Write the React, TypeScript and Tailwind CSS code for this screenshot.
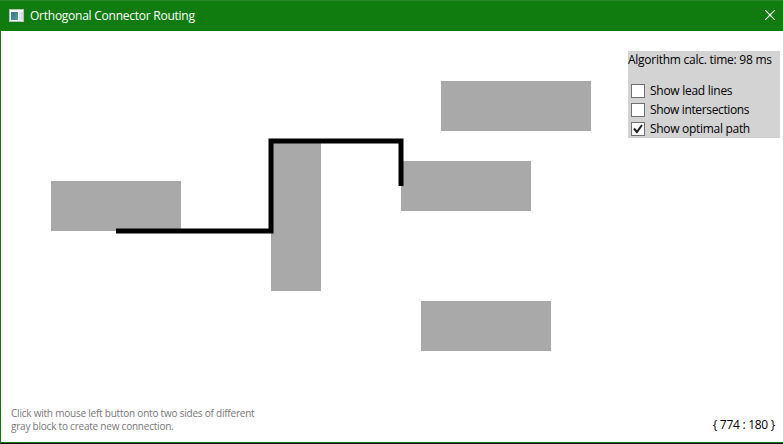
import React from "react";

const blocks = [
  "left-[50px] top-[150px] w-[130px] h-[50px]",
  "left-[270px] top-[110px] w-[50px] h-[150px]",
  "left-[440px] top-[50px] w-[150px] h-[50px]",
  "left-[400px] top-[130px] w-[130px] h-[50px]",
  "left-[420px] top-[270px] w-[130px] h-[50px]",
];

const options = [
  { label: "Show lead lines", checked: false, spacing: "tracking-[-0.27px]" },
  { label: "Show intersections", checked: false, spacing: "tracking-[-0.36px]" },
  { label: "Show optimal path", checked: true, spacing: "tracking-[-0.3px]" },
];

function TitleBar() {
  return (
    <header className="flex h-[31px] items-center border-t border-[#2a8a2a] bg-[#107c10] pl-[9px] pr-2 text-white">
      <svg width="15" height="13" viewBox="0 0 15 13" className="relative -top-px shrink-0">
        <defs>
          <linearGradient id="pane" x1="0" y1="0" x2="1" y2="1">
            <stop offset="0" stopColor="#3c6f9c" />
            <stop offset="1" stopColor="#4fa08a" />
          </linearGradient>
        </defs>
        <rect width="15" height="13" fill="#b9bec0" />
        <rect x="1" y="1" width="13" height="11" fill="#f4f4f6" />
        <rect x="2" y="3" width="7" height="8" fill="url(#pane)" />
        <rect x="10" y="3" width="2" height="8" fill="#e6e9ec" />
        <rect x="12" y="3" width="2" height="8" fill="#d3dcd8" />
      </svg>
      <h1 className="ml-1.5 whitespace-nowrap text-[12px] leading-4 tracking-[-0.25px]">Orthogonal Connector Routing</h1>
      <svg className="relative -top-px ml-auto" width="10" height="10" viewBox="0 0 10 10" stroke="white" strokeWidth="1.2">
        <path d="M0 0L10 10M10 0L0 10" />
      </svg>
    </header>
  );
}

function Check({ checked }: { checked: boolean }) {
  return (
    <span className="flex size-[14px] shrink-0 items-center justify-center border border-[#707070] bg-white">
      {checked && (
        <svg width="12" height="12" viewBox="0 0 12 12" fill="none" stroke="#212121" strokeWidth="2">
          <path d="M2 5.5L4.9 9L10 2" />
        </svg>
      )}
    </span>
  );
}

export default function App() {
  return (
    <div className="flex h-[444px] w-[783px] flex-col overflow-hidden bg-white font-['Open_Sans','Noto_Sans',sans-serif] text-[12px] text-black">
      <TitleBar />
      <main className="relative flex flex-1 flex-col justify-between border-b border-l border-[#107c10]">
        {blocks.map((b) => (
          <div key={b} className={`absolute bg-[#a9a9a9] ${b}`} />
        ))}
        <svg className="absolute left-0 top-0" width="782" height="411" fill="none" stroke="black" strokeWidth="5">
          <path d="M115 200H270V110H400V155" />
        </svg>
        <aside className="mr-[3px] mt-5 h-[87px] w-[152px] self-end bg-[#d3d3d3]">
          <p className="whitespace-nowrap leading-[17px] tracking-[-0.26px]">Algorithm calc. time: 98 ms</p>
          <div className="mt-[13px] flex flex-col pl-[3px]">
            {options.map((o) => (
              <label key={o.label} className="flex h-[19px] items-center gap-[5px]">
                <Check checked={o.checked} />
                <span className={`whitespace-nowrap leading-4 ${o.spacing}`}>{o.label}</span>
              </label>
            ))}
          </div>
        </aside>
        <footer className="flex items-end justify-between pb-[9px] pl-2.5 pr-2">
          <p className="text-[10px] leading-[13px] tracking-[-0.22px] text-[#787878]">
            Click with mouse left button onto two sides of different
            <br />
            gray block to create new connection.
          </p>
          <p className="leading-4 tracking-[-0.27px]">{"{ 774 : 180 }"}</p>
        </footer>
      </main>
      <div className="h-px bg-[#101010]" />
    </div>
  );
}
